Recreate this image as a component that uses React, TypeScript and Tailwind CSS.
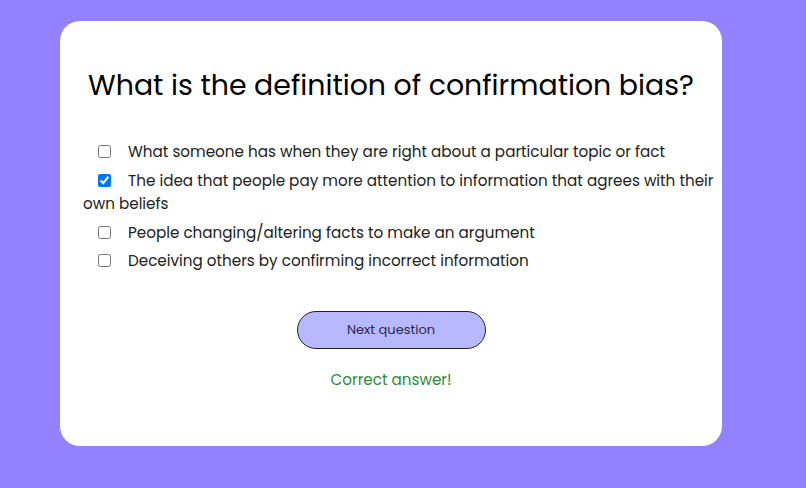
const OPTIONS = [
  { text: 'What someone has when they are right about a particular topic or fact', checked: false },
  { text: 'The idea that people pay more attention to information that agrees with their own beliefs', checked: true },
  { text: 'People changing/altering facts to make an argument', checked: false },
  { text: 'Deceiving others by confirming incorrect information', checked: false },
];

export default function App() {
  return (
    <div className="min-h-[488px] w-full bg-[#9381ff] pt-[21px] pl-[60px] font-['Poppins','Inter',sans-serif] text-[#222]">
      <div className="flex h-[425px] w-[662px] flex-col rounded-[20px] bg-white px-[23px] pt-[43px]">
        <h1 className="text-center text-[28.4px] leading-[42px] text-black">
          What is the definition of confirmation bias?
        </h1>

        <div className="mt-[34px] mr-[-16px] flex flex-col gap-[5px]">
          {OPTIONS.map(o => (
            <label key={o.text} className="block text-[15.2px] leading-[23.5px]">
              <input
                type="checkbox"
                defaultChecked={o.checked}
                className="mr-[17px] ml-[15px] h-[13px] w-[13px] align-[-1px] accent-[#0075ff]"
              />
              {o.text}
            </label>
          ))}
        </div>

        <div className="mt-[38px] flex flex-col items-center">
          <button className="h-[38px] w-[189px] rounded-full border border-[#222] bg-[#b8b8ff] text-[13px] text-[#2a2848]">
            Next question
          </button>
          <p className="mt-[20px] text-[15.2px] text-[#2e8a3c]">Correct answer!</p>
        </div>
      </div>
    </div>
  );
}
